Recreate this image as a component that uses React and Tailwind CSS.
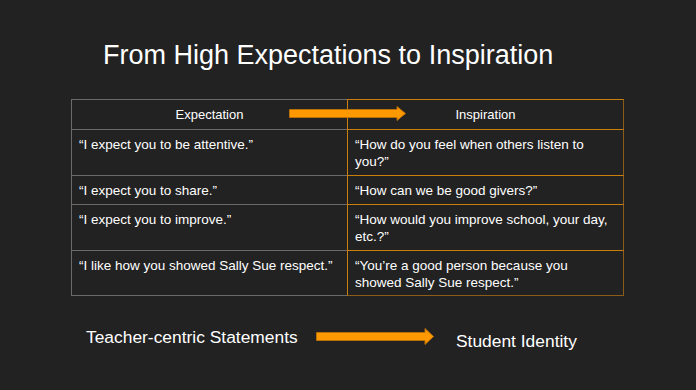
import React from "react";

const rows = [
  {
    left: "“I expect you to be attentive.”",
    right: ["“How do you feel when others listen to", "you?”"],
    h: "h-[46px]",
  },
  {
    left: "“I expect you to share.”",
    right: ["“How can we be good givers?”"],
    h: "h-[29px]",
  },
  {
    left: "“I expect you to improve.”",
    right: ["“How would you improve school, your day,", "etc.?”"],
    h: "h-[46px]",
  },
  {
    left: "“I like how you showed Sally Sue respect.”",
    right: ["“You’re a good person because you", "showed Sally Sue respect.”"],
    h: "h-[46px]",
  },
];

const Arrow = ({ w, h, shaft, className }) => {
  const mid = h / 2;
  const headX = w - 9;
  return (
    <svg width={w} height={h} className={className} viewBox={`0 0 ${w} ${h}`}>
      <path
        d={`M0.5 ${mid - shaft / 2} H${headX} V0.5 L${w - 0.5} ${mid} L${headX} ${h - 0.5} V${mid + shaft / 2} H0.5 Z`}
        fill="#ff9900"
        stroke="#b86f08"
        strokeWidth="1"
      />
    </svg>
  );
};

const App = () => {
  return (
    <main className="w-[696px] h-[390px] bg-[#222222] text-white overflow-hidden font-['Liberation_Sans',Arial,sans-serif]">
      {/* Title */}
      <h1 className="pl-[103px] pt-[40px] text-[27px] leading-[31px]">
        From High Expectations to Inspiration
      </h1>

      {/* Table */}
      <div className="ml-[71px] mt-[28px] w-[553px] text-[13.5px] leading-[17px]">
        <div className="relative grid grid-cols-[276px_277px] h-[30px] text-[13px]">
          <div className="border-l border-t border-l-[#6b6b6b] border-t-[#6b6b6b] flex items-center justify-center">
            Expectation
          </div>
          <div className="border-l border-t border-r border-l-[#c8800a] border-t-[#c8800a] border-r-[#8c5c17] flex items-center justify-center">
            Inspiration
          </div>
          <Arrow w={117} h={15} shaft={8} className="absolute left-[218px] top-[7px]" />
        </div>

        {rows.map((row, i) => {
          const last = i === rows.length - 1;
          return (
            <div key={i} className={`grid grid-cols-[276px_277px] ${row.h}`}>
              <div
                className={`border-l border-t border-l-[#6b6b6b] border-t-[#6b6b6b] px-[7px] pt-[6px] ${last ? "border-b border-b-[#6b6b6b]" : ""}`}
              >
                {row.left}
              </div>
              <div
                className={`border-l border-t border-r border-l-[#c8800a] border-t-[#c8800a] border-r-[#8c5c17] px-[7px] pt-[6px] ${last ? "border-b border-b-[#8c5c17]" : ""}`}
              >
                {row.right.map((line) => (
                  <div key={line}>{line}</div>
                ))}
              </div>
            </div>
          );
        })}
      </div>

      {/* Bottom statement */}
      <div className="flex items-start mt-[30px] pl-[86px] text-[17.4px] leading-[20px]">
        <p className="w-[230px] mt-[1px]">Teacher-centric Statements</p>
        <Arrow w={118} h={17} shaft={8} className="mt-[2px]" />
        <p className="ml-[22px] mt-[5px]">Student Identity</p>
      </div>
    </main>
  );
};

export default App;
